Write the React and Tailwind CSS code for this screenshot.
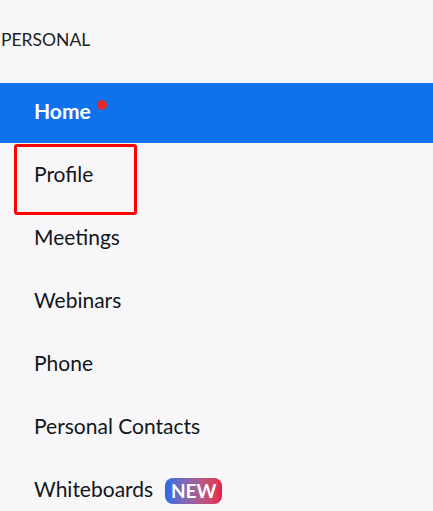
import React from "react";

const items = [
  { label: "Home", active: true, dot: true },
  { label: "Profile", outlined: true },
  { label: "Meetings" },
  { label: "Webinars" },
  { label: "Phone" },
  { label: "Personal Contacts" },
  { label: "Whiteboards", badge: "NEW" },
];

export default function App() {
  return (
    <div className="w-[433px] h-[511px] overflow-hidden bg-[#f7f7fa] text-[#131619] font-['Lato','Noto_Sans',sans-serif]">
      <div className="pt-[30px] pl-[1px] h-[83px] text-[17.5px] leading-[20px] text-[#222]">PERSONAL</div>
      <nav className="flex flex-col gap-[3px]">
        {items.map((item) => (
          <div
            key={item.label}
            className={
              "relative h-[60px] flex items-center pl-[34px] pb-[4px] text-[21px] " +
              (item.active ? "bg-[#0e72ed] text-white font-bold" : "")
            }
          >
            {item.outlined && (
              <div className="absolute left-[14px] top-[-2px] w-[123px] h-[71px] border-[3px] border-[#ff0000] rounded-[3px]" />
            )}
            <span>{item.label}</span>
            {item.dot && (
              <span className="absolute left-[97px] top-[17px] block w-[10px] h-[10px] rounded-full bg-[#e02828]" />
            )}
            {item.badge && (
              <span className="ml-[12px] mt-[4px] h-[26px] w-[57px] flex items-center justify-center rounded-[8px] bg-gradient-to-r from-[#1f6ae8] to-[#ec1844] text-white font-bold text-[19px]">
                {item.badge}
              </span>
            )}
          </div>
        ))}
      </nav>
    </div>
  );
}
